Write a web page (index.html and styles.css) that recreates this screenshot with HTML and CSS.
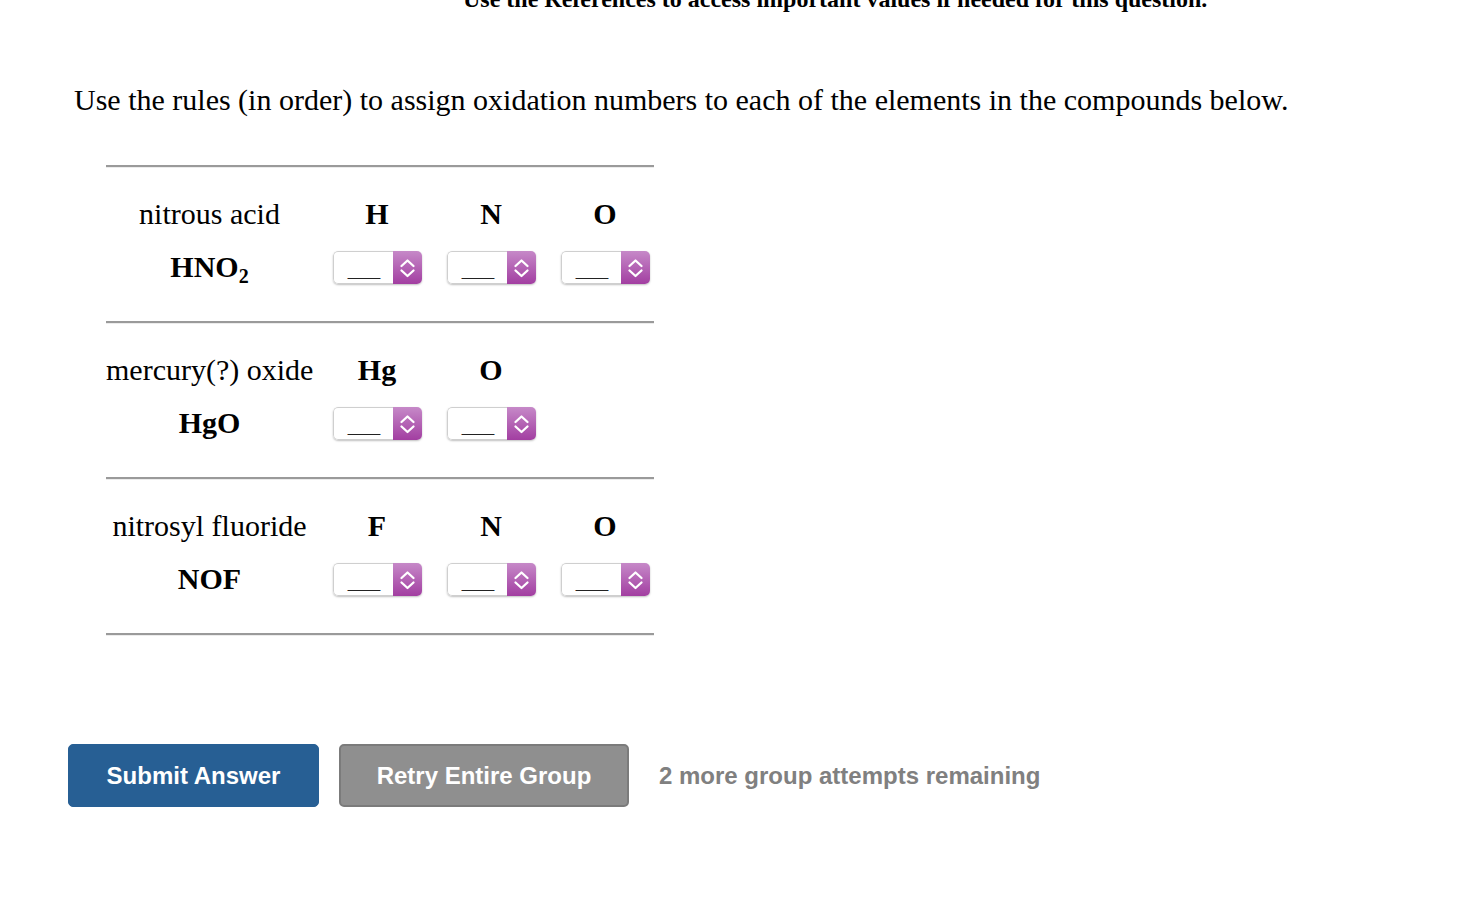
FILE: index.html
```html
<!DOCTYPE html>
<html>
<head>
<meta charset="utf-8">
<link rel="stylesheet" href="styles.css">
</head>
<body>
<div class="page">
  <div class="refs">Use the References to access important values if needed for this question.</div>
  <p class="intro">Use the rules (in order) to assign oxidation numbers to each of the elements in the compounds below.</p>

  <div class="table">
    <div class="rule"></div>
    <div class="compound">
      <div class="name">nitrous acid</div>
      <div class="el">H</div><div class="el">N</div><div class="el">O</div>
      <div class="formula">HNO<sub>2</sub></div>
      <div class="cell"><div class="sel"><span class="val">___</span><span class="arr"><svg viewBox="0 0 29 33" width="29" height="33"><path d="M8.5 15 L14.5 9.5 L20.5 15 M8.5 19.5 L14.5 25 L20.5 19.5" fill="none" stroke="#fff" stroke-width="2.3" stroke-linecap="round" stroke-linejoin="round"/></svg></span></div></div>
      <div class="cell"><div class="sel"><span class="val">___</span><span class="arr"><svg viewBox="0 0 29 33" width="29" height="33"><path d="M8.5 15 L14.5 9.5 L20.5 15 M8.5 19.5 L14.5 25 L20.5 19.5" fill="none" stroke="#fff" stroke-width="2.3" stroke-linecap="round" stroke-linejoin="round"/></svg></span></div></div>
      <div class="cell"><div class="sel"><span class="val">___</span><span class="arr"><svg viewBox="0 0 29 33" width="29" height="33"><path d="M8.5 15 L14.5 9.5 L20.5 15 M8.5 19.5 L14.5 25 L20.5 19.5" fill="none" stroke="#fff" stroke-width="2.3" stroke-linecap="round" stroke-linejoin="round"/></svg></span></div></div>
    </div>
    <div class="rule"></div>
    <div class="compound">
      <div class="name">mercury(?) oxide</div>
      <div class="el">Hg</div><div class="el">O</div><div class="el"></div>
      <div class="formula">HgO</div>
      <div class="cell"><div class="sel"><span class="val">___</span><span class="arr"><svg viewBox="0 0 29 33" width="29" height="33"><path d="M8.5 15 L14.5 9.5 L20.5 15 M8.5 19.5 L14.5 25 L20.5 19.5" fill="none" stroke="#fff" stroke-width="2.3" stroke-linecap="round" stroke-linejoin="round"/></svg></span></div></div>
      <div class="cell"><div class="sel"><span class="val">___</span><span class="arr"><svg viewBox="0 0 29 33" width="29" height="33"><path d="M8.5 15 L14.5 9.5 L20.5 15 M8.5 19.5 L14.5 25 L20.5 19.5" fill="none" stroke="#fff" stroke-width="2.3" stroke-linecap="round" stroke-linejoin="round"/></svg></span></div></div>
      <div class="cell"></div>
    </div>
    <div class="rule"></div>
    <div class="compound">
      <div class="name">nitrosyl fluoride</div>
      <div class="el">F</div><div class="el">N</div><div class="el">O</div>
      <div class="formula">NOF</div>
      <div class="cell"><div class="sel"><span class="val">___</span><span class="arr"><svg viewBox="0 0 29 33" width="29" height="33"><path d="M8.5 15 L14.5 9.5 L20.5 15 M8.5 19.5 L14.5 25 L20.5 19.5" fill="none" stroke="#fff" stroke-width="2.3" stroke-linecap="round" stroke-linejoin="round"/></svg></span></div></div>
      <div class="cell"><div class="sel"><span class="val">___</span><span class="arr"><svg viewBox="0 0 29 33" width="29" height="33"><path d="M8.5 15 L14.5 9.5 L20.5 15 M8.5 19.5 L14.5 25 L20.5 19.5" fill="none" stroke="#fff" stroke-width="2.3" stroke-linecap="round" stroke-linejoin="round"/></svg></span></div></div>
      <div class="cell"><div class="sel"><span class="val">___</span><span class="arr"><svg viewBox="0 0 29 33" width="29" height="33"><path d="M8.5 15 L14.5 9.5 L20.5 15 M8.5 19.5 L14.5 25 L20.5 19.5" fill="none" stroke="#fff" stroke-width="2.3" stroke-linecap="round" stroke-linejoin="round"/></svg></span></div></div>
    </div>
    <div class="rule"></div>
  </div>

  <div class="actions">
    <button class="btn submit">Submit Answer</button>
    <button class="btn retry">Retry Entire Group</button>
    <span class="remaining">2 more group attempts remaining</span>
  </div>
</div>
</body>
</html>
```

FILE: styles.css
```css
html, body {
  margin: 0;
  padding: 0;
  background: #fff;
}
body {
  font-family: "Liberation Serif", "Times New Roman", serif;
  color: #000;
  overflow: hidden;
}
.page {
  width: 1462px;
  height: 902px;
}
.refs {
  font-weight: bold;
  font-size: 24px;
  line-height: 24px;
  margin-top: -13px;
  padding-left: 463px;
  white-space: nowrap;
}
.intro {
  font-size: 30px;
  line-height: 36px;
  margin: 71px 0 0 74px;
  white-space: nowrap;
}
.table {
  margin: 47px 0 0 106px;
  width: 548px;
}
.rule {
  height: 0;
  border-top: 2px solid #9a9a9a;
  border-bottom: 1px solid #ececec;
  width: 548px;
}
.compound {
  display: grid;
  grid-template-columns: 214px 114px 114px 114px;
  grid-template-rows: 36px 34px;
  row-gap: 18px;
  padding: 28px 0 37px;
  align-items: center;
  font-size: 30px;
}
.name {
  text-align: center;
  padding-right: 7px;
  white-space: nowrap;
  line-height: 36px;
}
.el {
  text-align: center;
  font-weight: bold;
  line-height: 36px;
}
.formula {
  text-align: center;
  padding-right: 7px;
  font-weight: bold;
  line-height: 34px;
}
.formula sub {
  font-size: 20px;
  vertical-align: -6px;
  line-height: 0;
}
.cell {
  display: flex;
  justify-content: center;
  align-items: center;
}
.sel {
  display: flex;
  width: 89px;
  height: 33px;
  box-sizing: border-box;
  border-radius: 5px;
  box-shadow: 0 1px 2px rgba(0,0,0,0.25);
  overflow: hidden;
}
.val {
  flex: 1;
  box-sizing: border-box;
  border: 1px solid #cfcfcf;
  border-right: none;
  border-radius: 5px 0 0 5px;
  background: #fff;
  font-family: "Liberation Sans", Arial, sans-serif;
  font-size: 22px;
  letter-spacing: -2px;
  font-weight: bold;
  color: #222;
  text-align: center;
  line-height: 22px;
  padding: 6px 0 0 0;
}
.arr {
  width: 29px;
  height: 33px;
  background: linear-gradient(#c689c8, #a23ea1);
  display: block;
}
.arr svg {
  display: block;
}
.actions {
  display: flex;
  align-items: center;
  margin: 108px 0 0 68px;
  gap: 20px;
}
.btn {
  font-family: "Liberation Sans", Arial, Helvetica, sans-serif;
  font-weight: bold;
  font-size: 24px;
  color: #fff;
  height: 63px;
  border-radius: 5px;
  padding: 0;
  cursor: pointer;
}
.submit {
  width: 251px;
  background: #275f94;
  border: 1px solid #275f94;
}
.retry {
  width: 290px;
  background: #8f8f8f;
  border: 2px solid #7b7b7b;
}
.remaining {
  font-family: "Liberation Sans", Arial, Helvetica, sans-serif;
  font-weight: bold;
  font-size: 24px;
  color: #808080;
  margin-left: 10px;
}
```
